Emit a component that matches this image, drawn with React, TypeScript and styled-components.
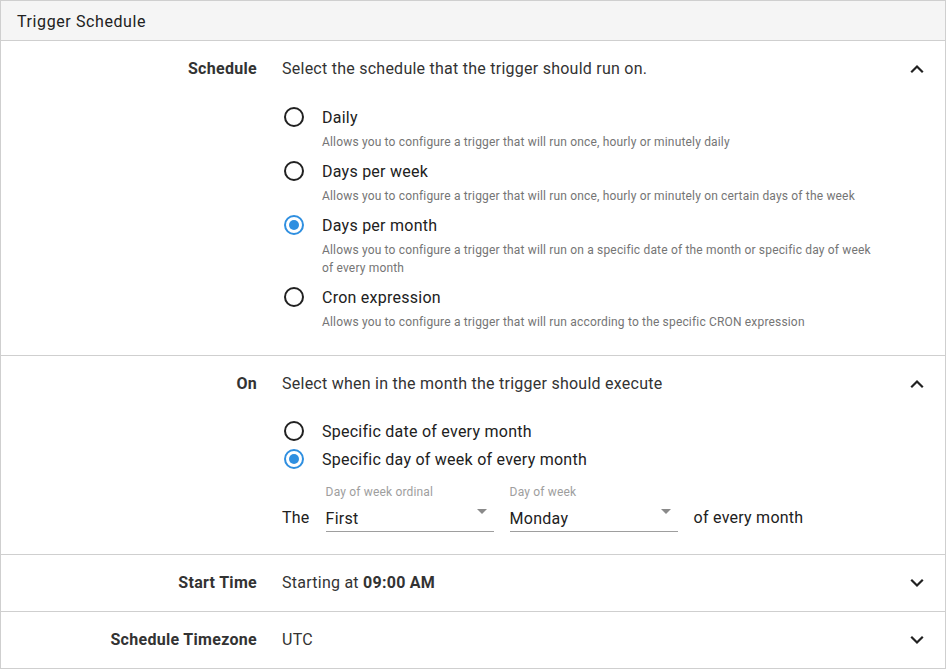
import React from "react";
import styled, { createGlobalStyle } from "styled-components";

const Global = createGlobalStyle`
  html, body { margin: 0; padding: 0; background: #ffffff; }
  body { font-family: Roboto, "Liberation Sans", Arial, sans-serif; color: #212121; }
  * { box-sizing: border-box; }
`;

const Panel = styled.div`
  width: 946px;
  border: 1px solid #cfcfcf;
  background: #fff;
`;

const PanelHeader = styled.div`
  height: 40px;
  background: #f5f5f5;
  border-bottom: 1px solid #cfcfcf;
  display: flex;
  align-items: center;
  padding: 1px 16px 0;
  font-size: 16px;
  letter-spacing: 0.6px;
  color: #212121;
`;

const Section = styled.div<{ $bottom?: number; $last?: boolean }>`
  display: grid;
  grid-template-columns: 256px 1fr 24px;
  column-gap: 25px;
  padding: 16px 16px ${(p) => p.$bottom ?? 16}px 0;
  border-bottom: ${(p) => (p.$last ? "none" : "1px solid #cfcfcf")};
`;

const Label = styled.div`
  font-size: 16px;
  font-weight: 700;
  line-height: 24px;
  letter-spacing: 0.3px;
  color: #333333;
  text-align: right;
`;

const Content = styled.div`
  display: flex;
  flex-direction: column;
  min-width: 0;
`;

const Summary = styled.div`
  font-size: 16px;
  line-height: 24px;
  letter-spacing: 0.25px;
  color: #333333;
  b { font-weight: 700; }
`;

const ChevronBox = styled.div`
  height: 24px;
  display: flex;
  align-items: center;
  justify-content: center;
  color: #212121;
`;

const RadioList = styled.div<{ $top: number }>`
  display: flex;
  flex-direction: column;
  gap: 4px;
  margin-top: ${(p) => p.$top}px;
`;

const Option = styled.div`
  display: flex;
  flex-direction: column;
  & + & { margin-top: 4px; }
`;

const RadioRow = styled.div`
  display: flex;
  align-items: center;
  gap: 16px;
  height: 24px;
  font-size: 16px;
  letter-spacing: 0.25px;
  color: #212121;
`;

const RadioHit = styled.span`
  width: 24px;
  height: 24px;
  display: flex;
  align-items: center;
  justify-content: center;
`;

const RadioCircle = styled.span<{ $checked?: boolean }>`
  width: 20px;
  height: 20px;
  border-radius: 50%;
  border: 2px solid ${(p) => (p.$checked ? "#2f8fe0" : "#212121")};
  display: flex;
  align-items: center;
  justify-content: center;
  &::after {
    content: "";
    width: 10px;
    height: 10px;
    border-radius: 50%;
    background: #2f8fe0;
    display: ${(p) => (p.$checked ? "block" : "none")};
  }
`;

const Desc = styled.div`
  margin-top: 4px;
  padding-left: 40px;
  font-size: 12px;
  line-height: 18px;
  letter-spacing: 0.17px;
  color: #757575;
`;

const SelectRow = styled.div`
  display: flex;
  align-items: flex-end;
  gap: 16px;
  margin-top: 13px;
`;

const InlineText = styled.span`
  font-size: 16px;
  line-height: 24px;
  letter-spacing: 0.25px;
  margin-bottom: 2px;
  color: #212121;
`;

const Field = styled.div`
  width: 168px;
  display: flex;
  flex-direction: column;
`;

const FieldLabel = styled.div`
  font-size: 12px;
  line-height: 16px;
  letter-spacing: 0.17px;
  color: #9e9e9e;
  margin-bottom: 7px;
`;

const FieldValue = styled.div`
  position: relative;
  height: 25px;
  font-size: 16px;
  line-height: 24px;
  letter-spacing: 0.25px;
  color: #212121;
  border-bottom: 1px solid #9e9e9e;
`;

const Caret = styled.span`
  position: absolute;
  right: 7px;
  top: 2px;
  width: 0;
  height: 0;
  border-left: 5px solid transparent;
  border-right: 5px solid transparent;
  border-top: 5px solid #8a8a8a;
`;

const Chevron = ({ up }: { up?: boolean }) => (
  <svg width="24" height="24" viewBox="0 0 24 24" fill="none" stroke="currentColor" strokeWidth="2.2" strokeLinecap="square">
    {up ? <polyline points="7 14.5 12 9.5 17 14.5" /> : <polyline points="7 9.5 12 14.5 17 9.5" />}
  </svg>
);

const Radio = ({ checked, label }: { checked?: boolean; label: string }) => (
  <RadioRow>
    <RadioHit>
      <RadioCircle $checked={checked} />
    </RadioHit>
    {label}
  </RadioRow>
);

const scheduleOptions = [
  { label: "Daily", desc: "Allows you to configure a trigger that will run once, hourly or minutely daily" },
  { label: "Days per week", desc: "Allows you to configure a trigger that will run once, hourly or minutely on certain days of the week" },
  {
    label: "Days per month",
    desc: "Allows you to configure a trigger that will run on a specific date of the month or specific day of week of every month",
    checked: true,
  },
  { label: "Cron expression", desc: "Allows you to configure a trigger that will run according to the specific CRON expression" },
];

export default function App() {
  return (
    <>
      <Global />
      <Panel>
        <PanelHeader>Trigger Schedule</PanelHeader>

        <Section $bottom={24}>
          <Label>Schedule</Label>
          <Content>
            <Summary>Select the schedule that the trigger should run on.</Summary>
            <RadioList $top={24}>
              {scheduleOptions.map((o) => (
                <Option key={o.label}>
                  <Radio checked={o.checked} label={o.label} />
                  <Desc>{o.desc}</Desc>
                </Option>
              ))}
            </RadioList>
          </Content>
          <ChevronBox>
            <Chevron up />
          </ChevronBox>
        </Section>

        <Section $bottom={22}>
          <Label>On</Label>
          <Content>
            <Summary>Select when in the month the trigger should execute</Summary>
            <RadioList $top={23}>
              <Radio label="Specific date of every month" />
              <Radio checked label="Specific day of week of every month" />
            </RadioList>
            <SelectRow>
              <InlineText>The</InlineText>
              <Field>
                <FieldLabel>Day of week ordinal</FieldLabel>
                <FieldValue>
                  First
                  <Caret />
                </FieldValue>
              </Field>
              <Field>
                <FieldLabel>Day of week</FieldLabel>
                <FieldValue>
                  Monday
                  <Caret />
                </FieldValue>
              </Field>
              <InlineText>of every month</InlineText>
            </SelectRow>
          </Content>
          <ChevronBox>
            <Chevron up />
          </ChevronBox>
        </Section>

        <Section>
          <Label>Start Time</Label>
          <Content>
            <Summary>
              Starting at <b>09:00 AM</b>
            </Summary>
          </Content>
          <ChevronBox>
            <Chevron />
          </ChevronBox>
        </Section>

        <Section $last>
          <Label>Schedule Timezone</Label>
          <Content>
            <Summary>UTC</Summary>
          </Content>
          <ChevronBox>
            <Chevron />
          </ChevronBox>
        </Section>
      </Panel>
    </>
  );
}
